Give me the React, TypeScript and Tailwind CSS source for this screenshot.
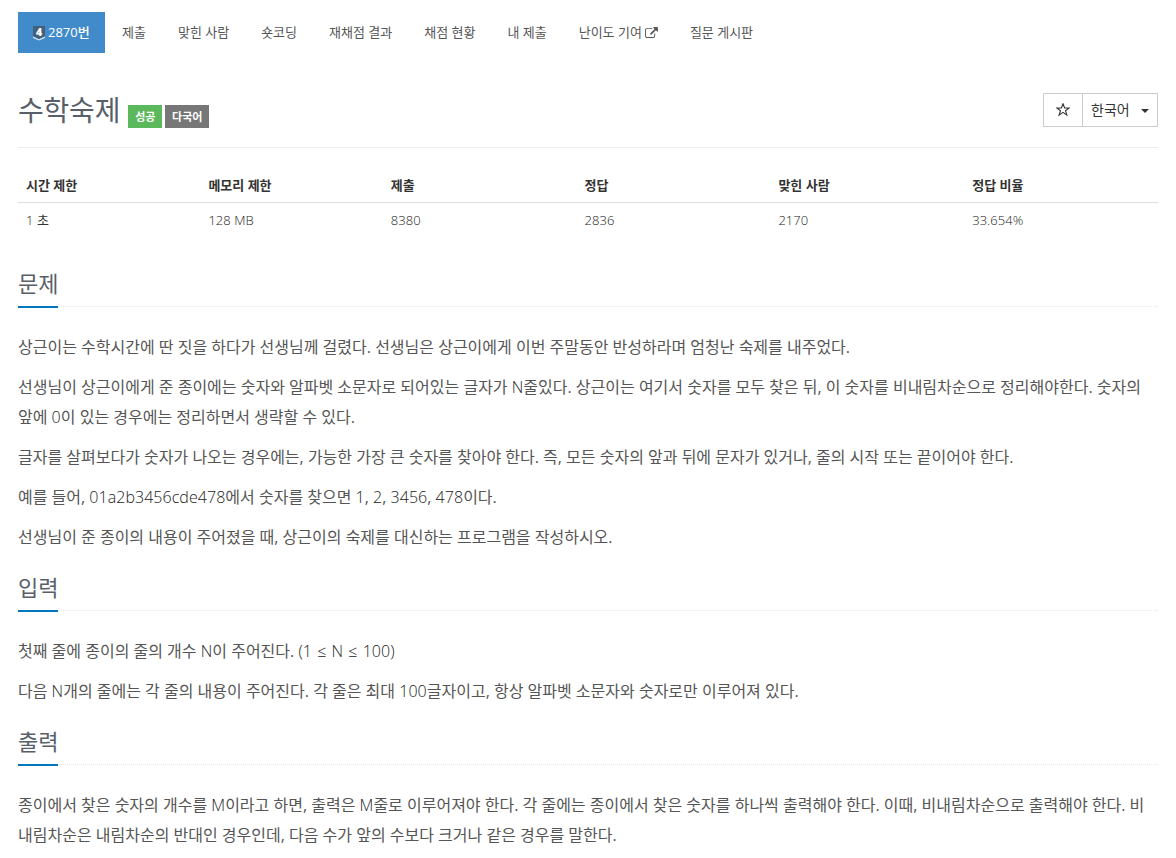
interface NavItem {
  label: string;
  external?: boolean;
}

interface Stat {
  title: string;
  value: string;
  width: string;
}

interface ProblemSection {
  id: string;
  title: string;
  paragraphs: string[];
}

const navItems: NavItem[] = [
  { label: '제출' },
  { label: '맞힌 사람' },
  { label: '숏코딩' },
  { label: '재채점 결과' },
  { label: '채점 현황' },
  { label: '내 제출' },
  { label: '난이도 기여', external: true },
  { label: '질문 게시판' }
]

const stats: Stat[] = [
  { title: '시간 제한', value: '1 초', width: 'w-[16%]' },
  { title: '메모리 제한', value: '128 MB', width: 'w-[16%]' },
  { title: '제출', value: '8380', width: 'w-[17%]' },
  { title: '정답', value: '2836', width: 'w-[17%]' },
  { title: '맞힌 사람', value: '2170', width: 'w-[17%]' },
  { title: '정답 비율', value: '33.654%', width: 'w-[17%]' }
]

const sections: ProblemSection[] = [
  {
    id: 'description',
    title: '문제',
    paragraphs: [
      '상근이는 수학시간에 딴 짓을 하다가 선생님께 걸렸다. 선생님은 상근이에게 이번 주말동안 반성하라며 엄청난 숙제를 내주었다.',
      '선생님이 상근이에게 준 종이에는 숫자와 알파벳 소문자로 되어있는 글자가 N줄있다. 상근이는 여기서 숫자를 모두 찾은 뒤, 이 숫자를 비내림차순으로 정리해야한다. 숫자의 앞에 0이 있는 경우에는 정리하면서 생략할 수 있다.',
      '글자를 살펴보다가 숫자가 나오는 경우에는, 가능한 가장 큰 숫자를 찾아야 한다. 즉, 모든 숫자의 앞과 뒤에 문자가 있거나, 줄의 시작 또는 끝이어야 한다.',
      '예를 들어, 01a2b3456cde478에서 숫자를 찾으면 1, 2, 3456, 478이다.',
      '선생님이 준 종이의 내용이 주어졌을 때, 상근이의 숙제를 대신하는 프로그램을 작성하시오.'
    ]
  },
  {
    id: 'input',
    title: '입력',
    paragraphs: [
      '첫째 줄에 종이의 줄의 개수 N이 주어진다. (1 ≤ N ≤ 100)',
      '다음 N개의 줄에는 각 줄의 내용이 주어진다. 각 줄은 최대 100글자이고, 항상 알파벳 소문자와 숫자로만 이루어져 있다.'
    ]
  },
  {
    id: 'output',
    title: '출력',
    paragraphs: [
      '종이에서 찾은 숫자의 개수를 M이라고 하면, 출력은 M줄로 이루어져야 한다. 각 줄에는 종이에서 찾은 숫자를 하나씩 출력해야 한다. 이때, 비내림차순으로 출력해야 한다. 비내림차순은 내림차순의 반대인 경우인데, 다음 수가 앞의 수보다 크거나 같은 경우를 말한다.'
    ]
  }
]

// Latin letters and digits are set light, Hangul stays at regular weight
function MixedText({ text }: { text: string }) {
  return (
    <>
      {text.split(/([0-9A-Za-z(][0-9A-Za-z()≤ .%]*)/).map((part, i) => (
        i % 2 === 1 ? (
          <span key={i} className={part.includes('≤') ? 'font-light text-[#222] [word-spacing:1.1px]' : 'font-light text-[#222] tracking-[0.05px]'}>
            {part}
          </span>
        ) : part
      ))}
    </>
  )
}

function TierBadge() {
  return (
    <svg viewBox="0 0 12 15" className="mt-0.5 h-[15px] w-3 shrink-0 overflow-visible">
      <path d="M0 0h12v10L6 13 0 10z" fill="#435f7a" />
      <path d="M0 10.6l6 2.6 6-2.6v1.3l-6 2.6-6-2.6z" fill="#d5e3ee" />
      <text x="6" y="9.8" textAnchor="middle" fontSize="10.5" fontWeight="800" fill="#fff">4</text>
    </svg>
  )
}

function ExternalIcon() {
  return (
    <svg viewBox="0 0 1792 1536" className="ml-[3px] h-[11px] w-[13px]" fill="currentColor">
      <path d="M1408 928v320q0 119-84.5 203.5T1120 1536H288q-119 0-203.5-84.5T0 1248V416q0-119 84.5-203.5T288 128h704q14 0 23 9t9 23v64q0 14-9 23t-23 9H288q-66 0-113 47t-47 113v832q0 66 47 113t113 47h832q66 0 113-47t47-113V928q0-14 9-23t23-9h64q14 0 23 9t9 23zm384-864v512q0 26-19 45t-45 19-45-19l-176-176-652 652q-10 10-23 10t-23-10L676 983q-10-10-10-23t10-23l652-652-176-176q-19-19-19-45t19-45 45-19h512q26 0 45 19t19 45z" />
    </svg>
  )
}

function StarIcon() {
  return (
    <svg viewBox="0 0 14 14" className="mr-px h-3.5 w-3.5" fill="none" stroke="#333" strokeWidth="1.1">
      <path d="M7 .8l1.6 4.2h4.6L9.5 7.7l1.4 4.4L7 9.4l-3.9 2.7 1.4-4.4L.8 5h4.6z" />
    </svg>
  )
}

export default function App() {
  return (
    <div className="h-[858px] w-[1176px] overflow-hidden bg-white px-[18px] pt-3 font-['Open_Sans','Noto_Sans_CJK_KR',sans-serif] text-[13px] text-[#333]">
      <nav>
        <ul className="flex h-[41px] gap-0.5 leading-[41px] text-[#555]">
          <li className="flex w-[87px] items-center gap-[3px] bg-[#428bca] pl-[15px] text-white">
            <TierBadge />
            <span className="font-medium whitespace-nowrap">2870번</span>
          </li>
          {navItems.map((item) => (
            <li key={item.label} className="flex items-center px-[15px] whitespace-nowrap">
              {item.label}
              {item.external && <ExternalIcon />}
            </li>
          ))}
        </ul>
      </nav>

      <header className="mt-10 flex h-[55px] justify-between border-b border-[#eee]">
        <div className="flex">
          <h1 className="text-[28px] leading-[34px] tracking-[-0.2px] text-[#585f69]">수학숙제</h1>
          <div className="mt-3 ml-[8px] flex gap-[3px] text-[11px] leading-[23px] font-bold text-white">
            <span className="h-[23px] w-[34px] bg-[#5cb85c] text-center">성공</span>
            <span className="h-[23px] w-11 bg-[#777] text-center">다국어</span>
          </div>
        </div>
        <div className="flex h-[34px] border border-[#ccc]">
          <button className="flex w-[39px] items-center justify-center border-r border-[#ccc]">
            <StarIcon />
          </button>
          <button className="flex w-[74px] items-center pl-2 text-sm whitespace-nowrap">
            한국어
            <span className="mt-[2px] ml-[11px] border-x-4 border-t-4 border-x-transparent border-t-[#333]" />
          </button>
        </div>
      </header>

      <table className="mt-5 w-full table-fixed text-left">
        <thead>
          <tr className="h-[34px] border-b border-[#ddd]">
            {stats.map((stat) => (
              <th key={stat.title} className={`px-2 pt-px font-bold ${stat.width}`}>{stat.title}</th>
            ))}
          </tr>
        </thead>
        <tbody>
          <tr className="h-[37px]">
            {stats.map((stat) => (
              <td key={stat.title} className="px-2"><MixedText text={stat.value} /></td>
            ))}
          </tr>
        </tbody>
      </table>

      <main className="pt-[19px]">
        {sections.map((section) => (
          <section key={section.id} className="pt-[9px]">
            <div className="mb-[25px] flex h-10 border-b border-dotted border-[#e4e9f0]">
              <h2 className="h-[41px] w-10 border-b-2 border-[#0076bd] text-[22px] leading-[33px] whitespace-nowrap text-[#585f69]">
                {section.title}
              </h2>
            </div>
            {section.paragraphs.map((text) => (
              <p key={text} className="mb-2.5 text-base leading-[30px] text-[#555]">
                <MixedText text={text} />
              </p>
            ))}
          </section>
        ))}
      </main>
    </div>
  )
}
